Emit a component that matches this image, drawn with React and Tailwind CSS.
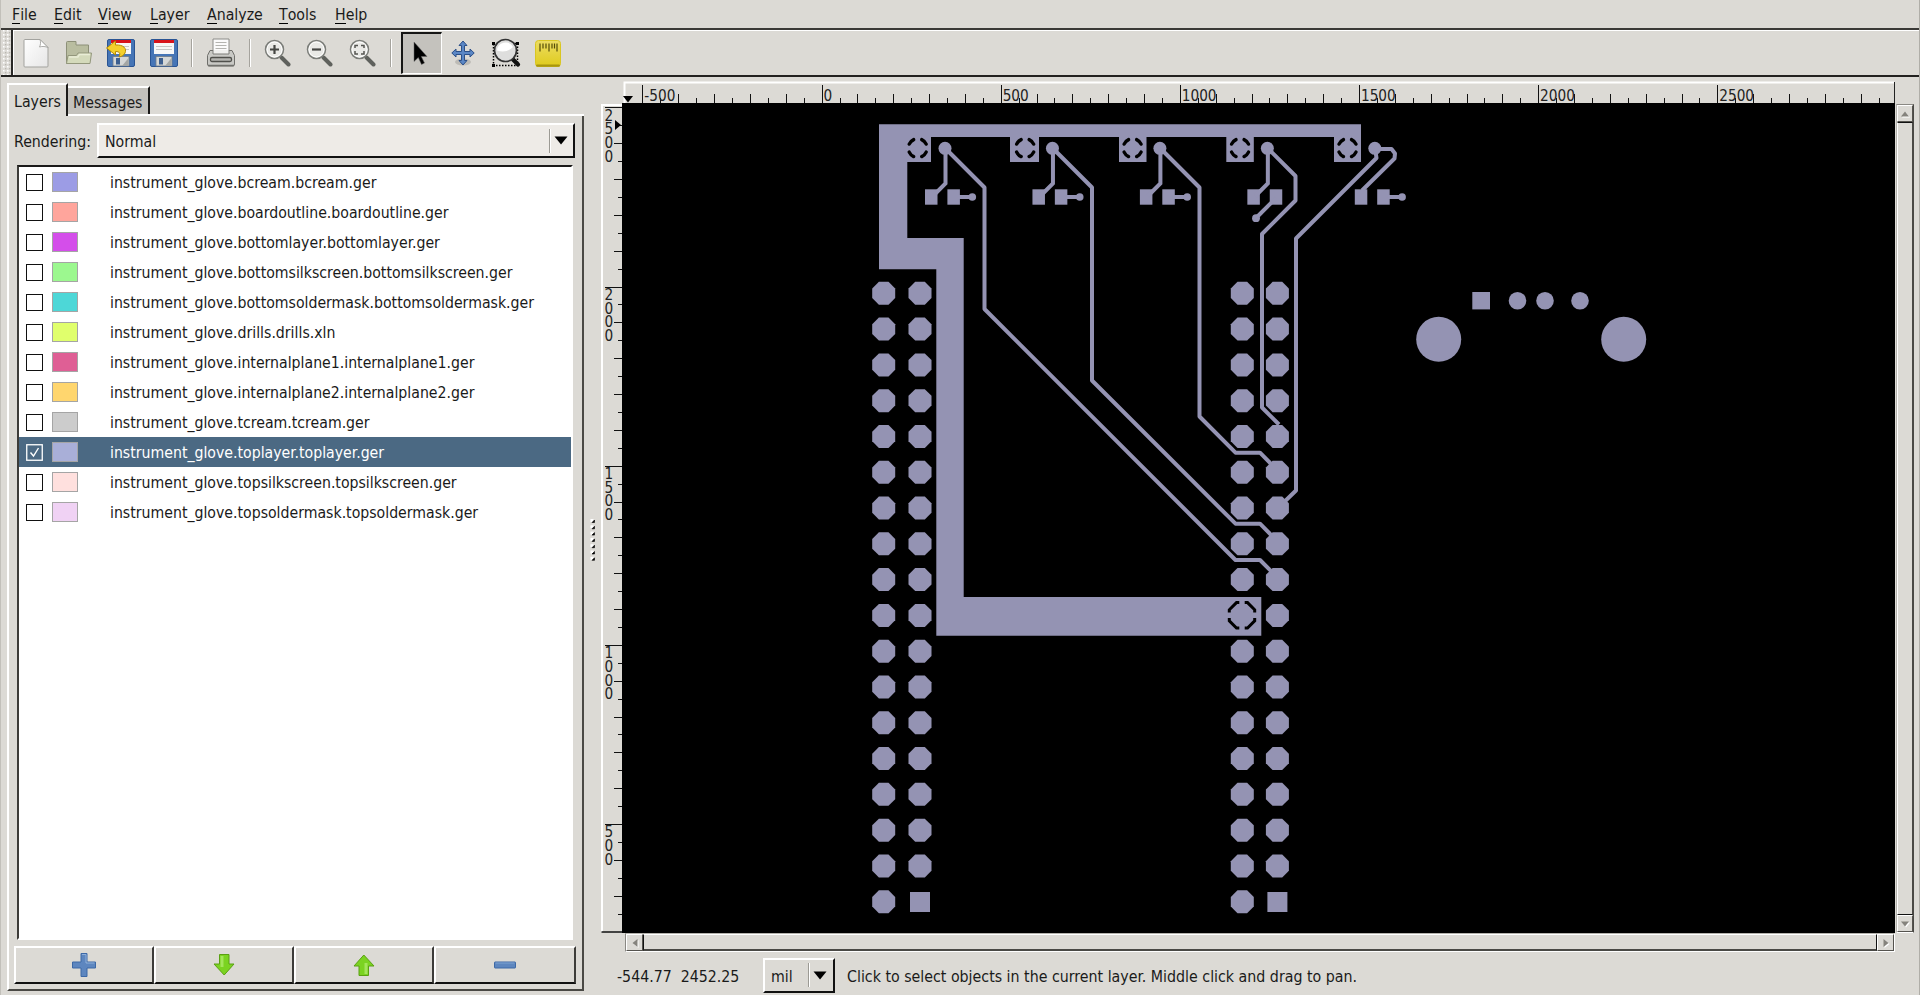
import React from "react";

const COPPER = "#9493b3";

const MENUS = [
  ["File", "w-[42px]"],
  ["Edit", "w-[44px]"],
  ["View", "w-[52px]"],
  ["Layer", "w-[57px]"],
  ["Analyze", "w-[72px]"],
  ["Tools", "w-[56px]"],
  ["Help", "w-[60px]"],
];

const LAYERS = [
  ["bcream.bcream.ger", "bg-[#9c9ce5]"],
  ["boardoutline.boardoutline.ger", "bg-[#ffa59c]"],
  ["bottomlayer.bottomlayer.ger", "bg-[#d44eea]"],
  ["bottomsilkscreen.bottomsilkscreen.ger", "bg-[#9cf88f]"],
  ["bottomsoldermask.bottomsoldermask.ger", "bg-[#4dd7d7]"],
  ["drills.drills.xln", "bg-[#e0ff6c]"],
  ["internalplane1.internalplane1.ger", "bg-[#df5f95]"],
  ["internalplane2.internalplane2.ger", "bg-[#ffd66e]"],
  ["tcream.tcream.ger", "bg-[#cccccc]"],
  ["toplayer.toplayer.ger", "bg-[#a9afd8]"],
  ["topsilkscreen.topsilkscreen.ger", "bg-[#ffe0de]"],
  ["topsoldermask.topsoldermask.ger", "bg-[#f0d2f4]"],
];

function MenuBar() {
  return (
    <div className="flex h-[28px] shrink-0 items-center pl-[11px] pt-[2px]">
      {MENUS.map(([name, w]) => (
        <div key={name} className={w}>
          <span className="inline-block h-[18px] border-b border-black leading-[18px]">{name[0]}</span>
          {name.slice(1)}
        </div>
      ))}
    </div>
  );
}

function Floppy() {
  return (
    <g>
      <rect x="0.5" y="0.5" width="27" height="27" rx="1.5" fill="#4675b6" stroke="#2a5493" />
      <rect x="4" y="1" width="20" height="14" fill="#f7f7f7" />
      <rect x="4" y="1" width="20" height="3" fill="#d8131b" />
      <path d="M6 7.500h16M6 10.500h16" stroke="#c6c6c6" strokeWidth="1" />
      <rect x="6" y="17.500" width="16" height="9.500" fill="#d5d7d6" stroke="#6f7b88" strokeWidth="0.8" />
      <rect x="9" y="19" width="4" height="6.500" fill="#3d5f8f" />
      <path d="M15 27l6.500-8v8z" fill="#a4a6a4" />
    </g>
  );
}

function Magnifier({ children }) {
  return (
    <svg width="28" height="28" viewBox="0 0 28 28">
      <path d="M17.500 18.500l7 7" stroke="#5f615d" strokeWidth="4" strokeLinecap="round" />
      <circle cx="10.500" cy="10.500" r="9" fill="#e9e9e6" stroke="#7b7d79" strokeWidth="1.500" />
      <circle cx="10.500" cy="10.500" r="7.500" fill="none" stroke="#fff" strokeWidth="1" />
      {children}
    </svg>
  );
}

function Sep() {
  return <div className="h-[28px] w-[2px] border-l border-r border-l-[#a5a39d] border-r-white" />;
}

function ToolBar() {
  return (
    <div className="flex h-[49px] shrink-0 border-b-2 border-t-2 border-b-[#22211f] border-t-[#3a3936]">
      <div className="w-[12px] shrink-0 border-r-2 border-r-[#2a2927] pl-[2px] pr-[1px]">
        <svg width="8" height="45">
          <defs>
            <pattern id="grip" width="4" height="4" patternUnits="userSpaceOnUse">
              <rect width="4" height="4" fill="#dcdad5" />
              <rect width="1.5" height="1.5" fill="#fff" />
              <rect x="2" y="2" width="1.3" height="1.3" fill="#b8b6b0" />
            </pattern>
          </defs>
          <rect width="8" height="45" fill="url(#grip)" />
        </svg>
      </div>
      <div className="flex grow items-center border-l border-t border-white pl-[8px]">
        <div className="w-[42px]">
          <svg width="30" height="32" viewBox="0 0 30 32">
            <defs>
              <linearGradient id="paper" x1="0" y1="0" x2="1" y2="1">
                <stop offset="0" stopColor="#ffffff" />
                <stop offset="1" stopColor="#e6e6e6" />
              </linearGradient>
            </defs>
            <path d="M3 2.500h15l8 8V29a1 1 0 0 1-1 1H3a1 1 0 0 1-1-1V3.500a1 1 0 0 1 1-1z" fill="url(#paper)" stroke="#a3a39f" />
            <path d="M18 2.500c1 3 .500 5.500-.500 7.500 3-1 6-.500 8.500.500z" fill="#fff" stroke="#a3a39f" strokeWidth="0.900" />
          </svg>
        </div>
        <div className="w-[42px]">
          <svg width="30" height="28" viewBox="0 0 30 28">
            <path d="M2.500 24.500V3.500q0-1 1-1h8.500v3.500h12.500v18.500z" fill="#b9bda0" stroke="#8d9078" />
            <path d="M4 16.500h8.500l1.500-2.500h13.500l-1.500 10.500H2.500z" fill="#d4dabb" stroke="#93977c" strokeLinejoin="round" />
            <path d="M5 18h9l1.500-2.500h10.500" stroke="#e9edd6" fill="none" strokeWidth="1.300" />
          </svg>
        </div>
        <div className="w-[43px]">
          <svg width="30" height="30" viewBox="-1 -1 30 30">
            <Floppy />
            <path d="M-0.500 9L8.500 2v4c8-.500 11.500 3.500 9.500 8-1 2-3 3.500-6 4 1.500-3.500 1-5.500-3.500-5.500V16z" fill="#f4d02c" stroke="#b58a04" strokeLinejoin="round" />
          </svg>
        </div>
        <div className="w-[42px]">
          <svg width="30" height="30" viewBox="-1 -1 30 30">
            <Floppy />
          </svg>
        </div>
        <div className="w-[15px]"><Sep /></div>
        <div className="w-[43px]">
          <svg width="30" height="32" viewBox="0 0 30 32">
            <path d="M7 2h16v13H7z" fill="#fbfbfb" stroke="#8c8c88" />
            <path d="M9.500 5.500h11M9.500 8.500h11M9.500 11.500h11" stroke="#b4b4b0" />
            <path d="M4 13.500h22l2.500 5V27q0 2-1.500 2H3q-1.500 0-1.500-2v-8.500z" fill="#c9c9c5" stroke="#6f6f6b" />
            <path d="M7 13v4h16v-4" fill="#f0f0ee" stroke="#7c7c78" />
            <rect x="4.500" y="20.500" width="21" height="4" rx="1.500" fill="#b4b4b0" stroke="#50504c" strokeWidth="1.300" />
            <path d="M2 28.500h26" stroke="#72726e" strokeWidth="1.500" />
          </svg>
        </div>
        <div className="w-[15px]"><Sep /></div>
        <div className="w-[42px]">
          <Magnifier>
            <path d="M10.500 6v9M6 10.500h9" stroke="#454643" strokeWidth="2.200" />
          </Magnifier>
        </div>
        <div className="w-[43px]">
          <Magnifier>
            <path d="M6 10.500h9" stroke="#454643" strokeWidth="2.200" />
          </Magnifier>
        </div>
        <div className="w-[41px]">
          <Magnifier>
            <path d="M6 9V6.500h3M12 6.500h3V9M15 12v3h-3M9 15H6v-3" fill="none" stroke="#555652" strokeWidth="1.500" />
          </Magnifier>
        </div>
        <div className="w-[11px]"><Sep /></div>
        <div className="flex h-[42px] w-[41px] items-center border-b border-l-2 border-r border-t-2 border-b-white border-l-[#161615] border-r-white border-t-[#161615] bg-[#c4c2bd] pl-[9px]">
          <svg width="18" height="26" viewBox="0 0 18 26">
            <path d="M2 1v19.500l4.300-4 3.200 7 3-1.500-3.200-6.500h5.700z" fill="#000" stroke="#666" strokeWidth="0.500" />
          </svg>
        </div>
        <div className="w-[42px] pl-[8px]">
          <svg width="26" height="28" viewBox="0 0 26 28">
            <ellipse cx="13" cy="23" rx="8" ry="3.500" fill="#a9a7a2" opacity="0.600" />
            <path d="M13 2l4 4.500h-2.500v6h5.500V10l4.200 4-4.200 4v-2.500h-5.500v6h2.500l-4 4.500-4-4.500h2.500v-6H6V18l-4.200-4L6 10v2.500h5.500v-6H9z" fill="#5b87c5" stroke="#2c5089" strokeLinejoin="round" />
          </svg>
        </div>
        <div className="w-[48px] pl-[7px]">
          <svg width="30" height="30" viewBox="0 0 30 30">
            <rect x="2.500" y="5.500" width="24" height="22" fill="none" stroke="#000" strokeWidth="1.500" strokeDasharray="1.500 1.500" />
            <path d="M1 4h3v3H1zM25 4h3v3h-3zM1 26h3v3H1z" fill="#000" />
            <path d="M22 21.500l5 5" stroke="#111" strokeWidth="4.200" strokeLinecap="round" />
            <circle cx="14.500" cy="12.500" r="11" fill="#dededd" stroke="#333" strokeWidth="1.700" />
            <path d="M6 12.500a8.500 8.500 0 0 1 16-3.500c-4 4-9 5.500-16 3.500z" fill="#fff" />
          </svg>
        </div>
        <div className="pl-[2px]">
          <svg width="29" height="31" viewBox="0 0 29 31">
            <defs>
              <linearGradient id="ruler" x1="0" y1="0" x2="0" y2="1">
                <stop offset="0" stopColor="#ecdc62" />
                <stop offset="1" stopColor="#dfcb1c" />
              </linearGradient>
            </defs>
            <rect x="1.500" y="2.500" width="25" height="26" rx="3" fill="url(#ruler)" stroke="#d9c621" />
            <rect x="2" y="26.500" width="24" height="2.300" rx="1.200" fill="#a8960f" />
            <path d="M6 5.500v8M9 5.500v5M12 5.500v5M15 5.500v8M18 5.500v5M20.500 5.500v5M23 5.500v8" stroke="#544b08" strokeWidth="1.200" />
          </svg>
        </div>
      </div>
    </div>
  );
}

function DownArrow() {
  return (
    <svg width="14" height="9" viewBox="0 0 14 9">
      <path d="M0.500 0.500h13L7 8.500z" fill="#000" />
    </svg>
  );
}

function CheckBox({ checked }) {
  return checked ? (
    <svg width="17" height="17" viewBox="0 0 17 17" className="shrink-0">
      <rect x="0.750" y="0.750" width="15.500" height="15.500" fill="none" stroke="#fff" strokeWidth="1.300" />
      <path d="M4.500 8.500l3 3.500 5-8" fill="none" stroke="#fff" strokeWidth="1.400" />
    </svg>
  ) : (
    <div className="h-[17px] w-[17px] shrink-0 border border-[#111] bg-white" />
  );
}

function PlusIcon() {
  return (
    <svg width="26" height="26" viewBox="0 0 26 26">
      <path d="M10 1.500h6v8.500h8.500v6H16v8.500h-6V16H1.500v-6H10z" fill="#5d86bf" stroke="#3c68a6" />
      <path d="M11 2.500h4v8.500h8.500" fill="none" stroke="#8fb0da" />
    </svg>
  );
}

function MinusIcon() {
  return (
    <svg width="26" height="26" viewBox="0 0 26 26">
      <rect x="2.500" y="10" width="21" height="6" rx="0.500" fill="#5d86bf" stroke="#3c68a6" />
      <path d="M3.500 11h19" stroke="#7fa3d2" />
    </svg>
  );
}

function GreenArrow({ up }) {
  return (
    <svg width="24" height="24" viewBox="0 0 24 24" className={up ? "rotate-180" : ""}>
      <path d="M7.500 1.500h9.500v9.500h5L12.200 22 2 11h5.500z" fill="#7bd321" stroke="#5aa012" strokeLinejoin="round" />
      <path d="M10 3v11" stroke="#b6ef74" strokeWidth="3" opacity="0.700" />
    </svg>
  );
}

function PanelButton({ w, children }) {
  return (
    <div className={"flex h-full items-center justify-center border-2 border-b-[#111] border-l-white border-r-[#3d3c39] border-t-white " + w}>
      {children}
    </div>
  );
}

function SidePanel() {
  return (
    <div className="flex w-[577px] flex-col">
      <div className="flex h-[33px] shrink-0 items-end">
        <div className="h-[33px] w-[61px] border-l-2 border-r-2 border-t-2 border-l-white border-r-[#1b1a19] border-t-white pl-[5px] pt-[7px]">Layers</div>
        <div className="h-[33px] grow border-b-2 border-b-white pt-[3px]">
          <div className="h-[28px] w-[82px] border-r-2 border-t-2 border-r-[#1b1a19] border-t-white bg-[#c4c2bd] pl-[5px] pt-[5px]">Messages</div>
        </div>
      </div>
      <div className="flex grow flex-col border-b-2 border-l-2 border-r-2 border-b-[#4a4945] border-l-white border-r-[#4a4945] pl-[5px]">
        <div className="mt-[7px] flex h-[35px] shrink-0 items-center">
          <div className="w-[83px] pt-[3px]">Rendering:</div>
          <div className="flex h-[35px] w-[478px] items-center border-2 border-b-[#111] border-l-white border-r-[#111] border-t-white bg-[#eeebe7]">
            <div className="w-[450px] pl-[6px] pt-[3px]">Normal</div>
            <div className="mr-[3px] h-[24px] w-[2px] border-l border-r border-l-[#9c9a94] border-r-white" />
            <DownArrow />
          </div>
        </div>
        <div className="ml-[3px] mt-[7px] h-[775px] w-[556px] shrink-0 border-2 border-b-white border-l-[#3d3c39] border-r-white border-t-[#1b1a19] bg-white">
          {LAYERS.map(([name, color]) => {
            const sel = name.startsWith("toplayer");
            return (
              <div key={name} className={"flex h-[30px] items-center pl-[7px] " + (sel ? "bg-[#4b6983] text-white" : "")}>
                <CheckBox checked={sel} />
                <div className={"ml-[9px] h-[20px] w-[26px] border border-[#a5a5a5] " + color} />
                <div className="ml-[32px] pt-[2px] text-[15.7px]">instrument_glove.{name}</div>
              </div>
            );
          })}
        </div>
        <div className="mt-[6px] flex h-[38px] shrink-0">
          <PanelButton w="w-[140px]"><PlusIcon /></PanelButton>
          <PanelButton w="w-[140px]"><GreenArrow /></PanelButton>
          <PanelButton w="w-[140px]"><GreenArrow up /></PanelButton>
          <PanelButton w="w-[142px]"><MinusIcon /></PanelButton>
        </div>
      </div>
    </div>
  );
}

const UNIT = 0.3583;

function HorizontalRuler() {
  const ticks = [];
  for (let v = -500; v <= 2950; v += 50) ticks.push(v);
  return (
    <svg width="1273" height="21" viewBox="622 82 1273 21" className="block overflow-visible">
      <rect x="624" y="82" width="1271" height="21" fill="#dcdad5" />
      <path d="M624.500 103V82.500H1894" fill="none" stroke="#fff" strokeWidth="2" />
      <path d="M1894.500 82v21" stroke="#222" />
      {ticks.map((v) => {
        const x = Math.round(821.600 + v * UNIT);
        const top = v % 500 === 0 ? 85 : v % 100 === 0 ? 94 : 98;
        return <rect key={v} x={x} y={top} width="1" height={103 - top} fill="#111" />;
      })}
      {ticks.filter((v) => v % 500 === 0).map((v) => (
        <text key={v} x={823.500 + v * UNIT} y="101" fontSize="15.200" fill="#222">{v}</text>
      ))}
      <path d="M623 96h10l-5 6.500z" fill="#000" />
    </svg>
  );
}

function VerticalRuler() {
  const ticks = [];
  for (let v = 2500; v >= 250; v -= 50) ticks.push(v);
  return (
    <svg width="21" height="829" viewBox="601 104 21 829" className="block">
      <rect x="601" y="104" width="21" height="829" fill="#dcdad5" />
      <path d="M602 932V105H622" fill="none" stroke="#fff" strokeWidth="2" />
      <path d="M601.500 932H622" stroke="#111" strokeWidth="1.500" />
      {ticks.map((v) => {
        const y = Math.round(107.400 + (2500 - v) * UNIT);
        const left = v % 500 === 0 ? 605 : v % 100 === 0 ? 614 : 618;
        return <rect key={v} x={left} y={y} width={622 - left} height="1" fill="#111" />;
      })}
      {ticks.filter((v) => v % 500 === 0).map((v) =>
        String(v).split("").map((c, i) => (
          <text key={v + "-" + i} x="604.500" y={120.700 + (2500 - v) * UNIT + i * 13.700} fontSize="15.200" fill="#222">{c}</text>
        ))
      )}
      <path d="M615 120v10l6-5z" fill="#000" />
    </svg>
  );
}

function octagon(cx, cy) {
  const r = 11.500;
  const k = 4.800;
  return [[-k, -r], [k, -r], [r, -k], [r, k], [k, r], [-k, r], [-r, k], [-r, -k]].map(([a, b]) => cx + a + "," + (cy + b)).join(" ");
}

function Board() {
  const rows = Array.from({ length: 18 }, (_, i) => 293.300 + i * 35.790);
  const groups = [0, 1, 2, 3, 4].map((i) => i * 107.450);
  return (
    <svg width="1273" height="830" viewBox="622 103 1273 830" className="block">
      <rect x="622" y="103" width="1273" height="830" fill="#000" />
      <path d="M879 124.300H1361V137H907.300V238H963.700V597H1261.300V635.700H936.300V269.300H879z" fill={COPPER} />
      <g fill={COPPER}>
        <rect x="906" y="136" width="25" height="26" />
        <rect x="1010" y="136" width="29" height="26" />
        <rect x="1119" y="136" width="27.500" height="26" />
        <rect x="1226.300" y="136" width="27.500" height="26" />
        <rect x="1334" y="136" width="27" height="26" />
      </g>
      {groups.map((dx) => (
        <path
          key={dx}
          transform={`translate(${917.700 + dx} 148.100)`}
          d="M-8.500-4A9.300 9.300 0 0 1-4-8.500M4-8.500A9.300 9.300 0 0 1 8.500-4M8.500 4A9.300 9.300 0 0 1 4 8.500M-4 8.500A9.300 9.300 0 0 1-8.500 4"
          fill="none"
          stroke="#000"
          strokeWidth="3.400"
          strokeLinecap="round"
        />
      ))}
      {groups.map((dx, i) => (
        <g key={dx} transform={`translate(${dx} 0)`} fill={COPPER}>
          <circle cx="945" cy="148.300" r="6.500" />
          <rect x="925" y="189.300" width="12.500" height="15.400" />
          <rect x="947.400" y="189.300" width="12.500" height="15.400" />
          {i !== 3 && <circle cx="972.300" cy="197" r="3.800" />}
          {i !== 3 && <rect x="958" y="195" width="14" height="4" />}
          {i !== 4 && <path d="M945.500 148V183.500L933 196" fill="none" stroke={COPPER} strokeWidth="4" />}
        </g>
      ))}
      <circle cx="1256" cy="218.200" r="3.900" fill={COPPER} />
      <g fill="none" stroke={COPPER} strokeWidth="4" strokeLinejoin="round">
        <path d="M945 148L984.500 187.500V309L1235.500 560H1260L1279 579" />
        <path d="M1052.500 148L1092 187.500V380.500L1235.500 523.700H1260L1279 543" />
        <path d="M1160 148L1199.500 187.500V416.500L1235.500 452.700H1260L1279 472" />
        <path d="M1267.500 148L1295.500 176V200.500L1262 234V407.500L1279 424.500" />
        <path d="M1256 218L1276 198" />
        <path d="M1375 148L1376.500 158L1296 238.500V490.500L1277 509" />
        <path d="M1375 149H1391.500L1395 153.500L1394.500 158.500L1362 190.500" />
      </g>
      <g fill={COPPER}>
        {rows.map((y, i) => (
          <React.Fragment key={y}>
            <polygon points={octagon(883.700, y)} />
            {i < 17 && <polygon points={octagon(920, y)} />}
            <polygon points={octagon(1242.300, y)} />
            {i < 17 && <polygon points={octagon(1277.400, y)} />}
          </React.Fragment>
        ))}
        <rect x="910" y="892" width="20" height="20" />
        <rect x="1267.400" y="892" width="20" height="20" />
        <rect x="1472.300" y="292" width="17.700" height="17.400" />
        <circle cx="1517.500" cy="300.700" r="8.800" />
        <circle cx="1545" cy="300.700" r="8.800" />
        <circle cx="1580" cy="300.700" r="8.800" />
        <circle cx="1438.700" cy="339.300" r="22.500" />
        <circle cx="1623.700" cy="339.300" r="22.500" />
      </g>
      <path
        transform="translate(1242 615.300)"
        d="M-12.700-2.700V-5.500L-5.500-12.700H-2.700M2.700-12.700H5.500L12.700-5.500V-2.700M12.700 2.700V5.500L5.500 12.700H2.700M-2.700 12.700H-5.500L-12.700 5.500V2.700"
        fill="none"
        stroke="#000"
        strokeWidth="3"
      />
    </svg>
  );
}

const THUMB = "border border-b-[#55534e] border-l-white border-r-[#55534e] border-t-white bg-[#dcdad5]";

function ScrollButton({ d, size }) {
  return (
    <div className={"flex shrink-0 items-center justify-center " + size + " " + THUMB}>
      <svg width="10" height="10" viewBox="0 0 10 10">
        <path d={d} fill="#fff" transform="translate(1 1)" />
        <path d={d} fill="#85837d" />
      </svg>
    </div>
  );
}

function VerticalScroll() {
  return (
    <div className="flex h-[829px] w-[18px] flex-col border border-b-white border-l-[#b5b3ad] border-r-[#4a4945] border-t-[#8a8883]">
      <ScrollButton size="h-[17px] w-[16px]" d="M1 7.500L5 2.500 9 7.500z" />
      <div className="grow border border-b-[#111] border-l-white border-r-[#4a4945] border-t-[#111]" />
      <ScrollButton size="h-[17px] w-[16px]" d="M1 2.500L5 7.500 9 2.500z" />
    </div>
  );
}

function HorizontalScroll() {
  return (
    <div className="ml-[3px] flex h-[19px] w-[1270px] border border-b-white border-l-[#8a8883] border-r-white border-t-[#b5b3ad]">
      <ScrollButton size="h-[17px] w-[17px]" d="M7.500 1L2.500 5 7.500 9z" />
      <div className="grow border-b-2 border-l border-r border-t border-b-[#4a4945] border-l-[#111] border-r-[#111] border-t-white" />
      <ScrollButton size="h-[17px] w-[17px]" d="M2.500 1L7.500 5 2.500 9z" />
    </div>
  );
}

function Splitter() {
  return (
    <div className="flex w-[17px] flex-col items-center pl-[1px] pt-[442px]">
      <svg width="6" height="44" viewBox="0 0 6 44">
        {[0, 1, 2, 3, 4, 5, 6].map((i) => (
          <g key={i}>
            <rect x="0.500" y={i * 6.300} width="3" height="3" fill="#fff" />
            <path d={`M2 ${i * 6.300 + 3.500}l2.500-2.500v2.500z`} fill="#000" stroke="#000" strokeWidth="0.600" />
          </g>
        ))}
      </svg>
    </div>
  );
}

function StatusBar() {
  return (
    <div className="flex grow items-center pb-[1px] pt-[4px]">
      <div className="ml-[16px] w-[146px] whitespace-pre pt-[3px]">-544.77  2452.25</div>
      <div className="flex h-[35px] w-[72px] items-center border-2 border-b-[#111] border-l-white border-r-[#111] border-t-white">
        <div className="w-[43px] pl-[6px] pt-[3px]">mil</div>
        <div className="mr-[3px] h-[24px] w-[2px] border-l border-r border-l-[#9c9a94] border-r-white" />
        <DownArrow />
      </div>
      <div className="ml-[12px] whitespace-nowrap pt-[3px] text-[15.8px]">Click to select objects in the current layer. Middle click and drag to pan.</div>
    </div>
  );
}

export default function App() {
  return (
    <div className="flex h-[995px] w-[1920px] flex-col overflow-hidden border-l border-r border-l-[#c2c0ba] border-r-[#b0aea8] bg-[#dcdad5] font-['DejaVu_Sans_Condensed','DejaVu_Sans',sans-serif] text-[15.75px] leading-[20px] text-[#1a1a1a] [font-stretch:condensed]">
      <MenuBar />
      <ToolBar />
      <div className="flex min-h-0 grow">
        <div className="flex pb-[4px] pl-[6px] pt-[6px]">
          <SidePanel />
        </div>
        <Splitter />
        <div className="flex flex-col pt-[5px]">
          <div className="flex">
            <div className="flex w-[1294px] flex-col">
              <div className="flex justify-end"><HorizontalRuler /></div>
              <div className="flex">
                <div className="pt-[1px]"><VerticalRuler /></div>
                <Board />
              </div>
            </div>
            <div className="pl-[1px] pt-[22px]"><VerticalScroll /></div>
          </div>
          <div className="pl-[21px]"><HorizontalScroll /></div>
          <StatusBar />
        </div>
      </div>
    </div>
  );
}
